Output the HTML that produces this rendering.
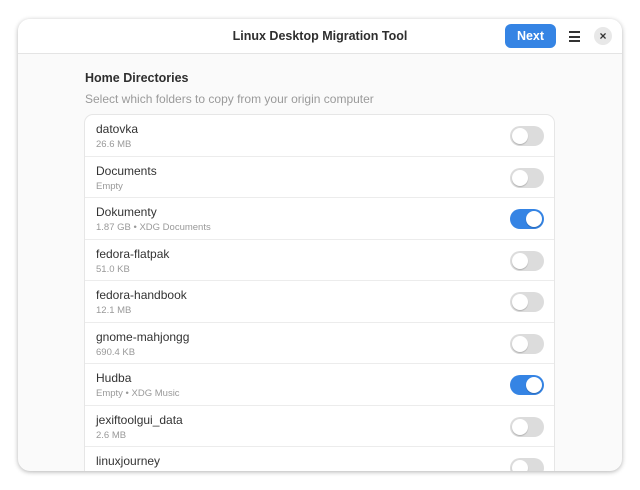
<!DOCTYPE html><html><head><style>
body{margin:0;width:640px;height:490px;background:#fff;font-family:"Liberation Sans",sans-serif;position:relative;overflow:hidden}
.win{position:absolute;left:18px;top:19px;width:604px;height:452px;border-radius:12px;background:#fafafa;box-shadow:0 1px 5px rgba(0,0,0,.3);overflow:hidden}
.hdr{position:absolute;left:0;top:0;width:604px;height:34px;background:#fff;border-bottom:1px solid #e4e4e4}
.title{position:absolute;left:0;width:604px;top:10px;text-align:center;font-weight:bold;font-size:12.5px;color:#2e2e2e}
.next{position:absolute;left:487px;top:5px;width:51px;height:24px;background:#3584e4;border-radius:6px;color:#fff;font-weight:bold;font-size:12.5px;text-align:center;line-height:24px}
.menu{position:absolute;left:551px;top:12px;width:11px}
.menu i{display:block;height:2px;background:#333;margin-bottom:2.5px}
.close{position:absolute;left:576px;top:8px;width:18px;height:18px;border-radius:50%;background:#e8e8e8;text-align:center;line-height:18px;font-size:12px;font-weight:bold;color:#333}
h3{position:absolute;left:67px;top:52px;margin:0;font-size:12.5px;color:#2e2e2e}
.sub{position:absolute;left:67px;top:73px;font-size:12px;color:#9a9a9a}
.list{position:absolute;left:67px;top:96px;width:469px;background:#fff;border-radius:8px;box-shadow:0 0 0 1px #e6e6e6}
.row{height:40.5px;border-bottom:1px solid #ececec;position:relative}
.n{position:absolute;left:11px;top:7px;font-size:12px;color:#333}
.s{position:absolute;left:11px;top:24px;font-size:9.5px;color:#999}
.t{position:absolute;left:425px;top:11px;width:34px;height:20px;border-radius:10px;background:#dcdcdc}
.t::after{content:"";position:absolute;left:2px;top:2px;width:16px;height:16px;border-radius:50%;background:#fff;box-shadow:0 1px 1px rgba(0,0,0,.2)}
.t.on{background:#3584e4}.t.on::after{left:16px}
</style></head><body><div class="win">
<div class="hdr"><div class="title">Linux Desktop Migration Tool</div><div class="next">Next</div><div class="menu"><i></i><i></i><i></i></div><div class="close">×</div></div>
<h3>Home Directories</h3><div class="sub">Select which folders to copy from your origin computer</div>
<div class="list">
<div class="row"><div class="n">datovka</div><div class="s">26.6 MB</div><div class="t"></div></div>
<div class="row"><div class="n">Documents</div><div class="s">Empty</div><div class="t"></div></div>
<div class="row"><div class="n">Dokumenty</div><div class="s">1.87 GB • XDG Documents</div><div class="t on"></div></div>
<div class="row"><div class="n">fedora-flatpak</div><div class="s">51.0 KB</div><div class="t"></div></div>
<div class="row"><div class="n">fedora-handbook</div><div class="s">12.1 MB</div><div class="t"></div></div>
<div class="row"><div class="n">gnome-mahjongg</div><div class="s">690.4 KB</div><div class="t"></div></div>
<div class="row"><div class="n">Hudba</div><div class="s">Empty • XDG Music</div><div class="t on"></div></div>
<div class="row"><div class="n">jexiftoolgui_data</div><div class="s">2.6 MB</div><div class="t"></div></div>
<div class="row"><div class="n">linuxjourney</div><div class="s"></div><div class="t"></div></div>
</div></div></body></html>
